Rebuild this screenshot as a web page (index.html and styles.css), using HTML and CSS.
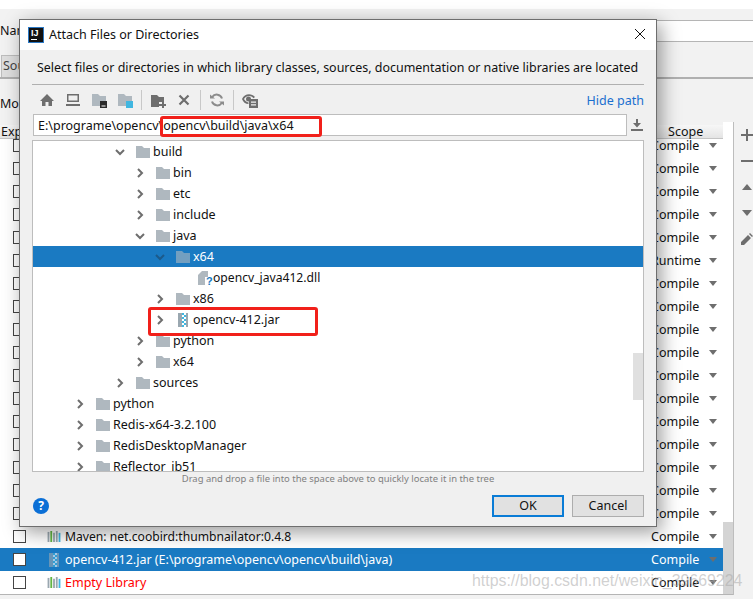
FILE: index.html
```html
<!DOCTYPE html>
<html lang="en">
<head>
<meta charset="utf-8">
<title>Attach Files or Directories</title>
<link rel="stylesheet" href="styles.css">
</head>
<body>
<svg class="defs" width="0" height="0" aria-hidden="true">
  <symbol id="folder" viewBox="0 0 14 12"><path d="M0 0h6l2 2h6v10H0z" fill="#afb8bf"/></symbol>
  <symbol id="chev-r" viewBox="0 0 10 10"><path d="M3 1l4 4-4 4" fill="none" stroke="currentColor" stroke-width="2"/></symbol>
  <symbol id="chev-d" viewBox="0 0 10 10"><path d="M1 3l4 4 4-4" fill="none" stroke="currentColor" stroke-width="2"/></symbol>
  <symbol id="lib" viewBox="0 0 14 12"><path d="M0 1h2v11H0z" fill="#9aa7b0"/><path d="M3 0h2v12H3z" fill="#62b543"/><path d="M6 2h2v10H6z" fill="#9aa7b0"/><path d="M9 0h2v12H9z" fill="#9aa7b0"/><path d="M12 2h2v10h-2z" fill="#40b6e0"/></symbol>
  <symbol id="jar" viewBox="0 0 10 14"><path d="M0 0h10v14H0z" fill="#9aa7b0"/><path d="M4 0h2v2H4zM6 2h2v2H6zM4 4h2v2H4zM6 6h2v2H6zM4 8h2v2H4zM6 10h2v2H6zM4 12h2v2H4z" fill="#40b6e0"/><path d="M6 0h2v2H6zM4 2h2v2H4zM6 4h2v2H6zM4 6h2v2H4zM6 8h2v2H6zM4 10h2v2H4zM6 12h2v2H6z" fill="#fff"/></symbol>
  <symbol id="caret" viewBox="0 0 8 5"><path d="M0 0h8L4 5z" fill="#6e6e6e"/></symbol>
</svg>

<div class="back">
  <div class="top-band"></div>
  <div class="name-row"><span class="clip-label">Nam</span><div class="name-input"></div></div>
  <div class="tab-row"><span class="tab">Sou</span></div>
  <div class="module-row"><span class="clip-label">Mo</span></div>
  <div class="deps">
    <div class="table">
      <div class="thead"><span class="th-exp">Exp</span><span class="th-scope">Scope</span></div>
      <div class="rows">
        <div class="rows-inner">
          <div class="row"><i class="check"></i><span class="name"></span><span class="scope">Compile</span><svg class="caret"><use href="#caret"/></svg></div>
          <div class="row"><i class="check"></i><span class="name"></span><span class="scope">Compile</span><svg class="caret"><use href="#caret"/></svg></div>
          <div class="row"><i class="check"></i><span class="name"></span><span class="scope">Compile</span><svg class="caret"><use href="#caret"/></svg></div>
          <div class="row"><i class="check"></i><span class="name"></span><span class="scope">Compile</span><svg class="caret"><use href="#caret"/></svg></div>
          <div class="row"><i class="check"></i><span class="name"></span><span class="scope">Compile</span><svg class="caret"><use href="#caret"/></svg></div>
          <div class="row"><i class="check"></i><span class="name"></span><span class="scope">Runtime</span><svg class="caret"><use href="#caret"/></svg></div>
          <div class="row"><i class="check"></i><span class="name"></span><span class="scope">Compile</span><svg class="caret"><use href="#caret"/></svg></div>
          <div class="row"><i class="check"></i><span class="name"></span><span class="scope">Compile</span><svg class="caret"><use href="#caret"/></svg></div>
          <div class="row"><i class="check"></i><span class="name"></span><span class="scope">Compile</span><svg class="caret"><use href="#caret"/></svg></div>
          <div class="row"><i class="check"></i><span class="name"></span><span class="scope">Compile</span><svg class="caret"><use href="#caret"/></svg></div>
          <div class="row"><i class="check"></i><span class="name"></span><span class="scope">Compile</span><svg class="caret"><use href="#caret"/></svg></div>
          <div class="row"><i class="check"></i><span class="name"></span><span class="scope">Compile</span><svg class="caret"><use href="#caret"/></svg></div>
          <div class="row"><i class="check"></i><span class="name"></span><span class="scope">Compile</span><svg class="caret"><use href="#caret"/></svg></div>
          <div class="row"><i class="check"></i><span class="name"></span><span class="scope">Compile</span><svg class="caret"><use href="#caret"/></svg></div>
          <div class="row"><i class="check"></i><span class="name"></span><span class="scope">Compile</span><svg class="caret"><use href="#caret"/></svg></div>
          <div class="row"><i class="check"></i><span class="name"></span><span class="scope">Compile</span><svg class="caret"><use href="#caret"/></svg></div>
          <div class="row"><i class="check"></i><span class="name"></span><span class="scope">Compile</span><svg class="caret"><use href="#caret"/></svg></div>
          <div class="row"><i class="check"></i><svg class="lib"><use href="#lib"/></svg><span class="name tight">Maven: net.coobird:thumbnailator:0.4.8</span><span class="scope">Compile</span><svg class="caret"><use href="#caret"/></svg></div>
          <div class="row selected"><i class="check"></i><svg class="row-jar"><use href="#jar"/></svg><span class="name">opencv-412.jar (E:\programe\opencv\opencv\build\java)</span><span class="scope">Compile</span><svg class="caret"><use href="#caret"/></svg></div>
          <div class="row"><i class="check"></i><svg class="lib"><use href="#lib"/></svg><span class="name error">Empty Library</span><span class="scope">Compile</span><svg class="caret"><use href="#caret"/></svg></div>
        </div>
      </div>
    </div>
    <div class="vscroll"><div class="vthumb"></div></div>
    <div class="side">
      <svg class="side-ic" viewBox="0 0 12 12"><path d="M5 0h2v5h5v2H7v5H5V7H0V5h5z" fill="#6e6e6e"/></svg>
      <svg class="side-ic" viewBox="0 0 12 12"><path d="M0 5h12v2H0z" fill="#6e6e6e"/></svg>
      <svg class="side-ic" viewBox="0 0 12 12"><path d="M1 9l5-6 5 6z" fill="#6e6e6e"/></svg>
      <svg class="side-ic" viewBox="0 0 12 12"><path d="M1 3h10L6 9z" fill="#6e6e6e"/></svg>
      <svg class="side-ic" viewBox="0 0 12 12"><path d="M0 12V9l7-7 3 3-7 7zM8 1l1-1 3 3-1 1z" fill="#6e6e6e"/></svg>
    </div>
  </div>
  <div class="foot"></div>
</div>

<div class="dialog">
  <div class="titlebar">
    <span class="logo">IJ</span>
    <span class="title">Attach Files or Directories</span>
    <svg class="close" viewBox="0 0 12 12"><path d="M1 1l10 10M11 1L1 11" stroke="#111" stroke-width="1" fill="none"/></svg>
  </div>
  <div class="dialog-body">
    <p class="message">Select files or directories in which library classes, sources, documentation or native libraries are located</p>
    <div class="toolbar">
      <svg class="tool" viewBox="0 0 16 16"><path d="M8 2L1 9h2v5h3.500v-4h3v4H13V9h2z" fill="#6e6e6e"/></svg>
      <svg class="tool" viewBox="0 0 16 16"><path d="M2 2h12v8H2zM3.500 3.500v5h9v-5zM1 12h14v2H1z" fill="#6e6e6e" fill-rule="evenodd"/></svg>
      <svg class="tool" viewBox="0 0 16 16"><path d="M1 2h6l2 2h6v10H1z" fill="#afb8bf"/><path d="M9 9h7v7H9z" fill="#2b2b2b"/><path d="M10.500 13.500h4v1h-4z" fill="#fff"/></svg>
      <svg class="tool" viewBox="0 0 16 16"><path d="M1 2h6l2 2h6v10H1z" fill="#afb8bf"/><path d="M9 9h7v7H9z" fill="#40b6e0"/></svg>
      <span class="tool-sep"></span>
      <svg class="tool" viewBox="0 0 16 16"><path d="M1 3h6l2 2h5v5H9v5H1z" fill="#6e6e6e"/><path d="M12 9h2v3h2v2h-2v2h-2v-2H9v-2h3z" fill="#6e6e6e"/></svg>
      <svg class="tool" viewBox="0 0 16 16"><path d="M3.500 3.500l9 9M12.500 3.500l-9 9" stroke="#6e6e6e" stroke-width="2.200" fill="none"/></svg>
      <span class="tool-sep"></span>
      <svg class="tool" viewBox="0 0 16 16"><path d="M13 6.500A5.500 5.500 0 0 0 3.200 5M3 9.500A5.500 5.500 0 0 0 12.800 11" stroke="#8c8c8c" stroke-width="2" fill="none"/><path d="M1 2.500l5 4H1zM15 13.500l-5-4h5z" fill="#8c8c8c"/></svg>
      <span class="tool-sep"></span>
      <svg class="tool" viewBox="0 0 16 16"><path d="M0 7C2 2 9 .5 13 5l-1.500 1.200C9 3 4 3.500 2 7c1 2 2.500 3 4.500 3.500V12C3.500 12 1 10 0 7z" fill="#6e6e6e"/><circle cx="6.500" cy="7" r="2.500" fill="#6e6e6e"/><path d="M7 7h9v9H7z" fill="#6e6e6e"/><path d="M9 9.500h5v1.200H9zM9 12.300h5v1.200H9z" fill="#f2f2f2"/></svg>
      <a class="hide-path">Hide path</a>
    </div>
    <div class="path-row">
      <div class="path-field">E:\programe\opencv\opencv\build\java\x64</div>
      <svg class="download" viewBox="0 0 12 12"><path d="M5 0h2v4h3L6 8.500 2 4h3zM0 10h12v2H0z" fill="#6e6e6e"/></svg>
    </div>
    <div class="tree">
      <div class="t d4"><svg class="chev"><use href="#chev-d"/></svg><svg class="folder"><use href="#folder"/></svg><span>build</span></div>
      <div class="t d5"><svg class="chev"><use href="#chev-r"/></svg><svg class="folder"><use href="#folder"/></svg><span>bin</span></div>
      <div class="t d5"><svg class="chev"><use href="#chev-r"/></svg><svg class="folder"><use href="#folder"/></svg><span>etc</span></div>
      <div class="t d5"><svg class="chev"><use href="#chev-r"/></svg><svg class="folder"><use href="#folder"/></svg><span>include</span></div>
      <div class="t d5"><svg class="chev"><use href="#chev-d"/></svg><svg class="folder"><use href="#folder"/></svg><span>java</span></div>
      <div class="t d6 sel"><svg class="chev"><use href="#chev-d"/></svg><svg class="folder"><use href="#folder"/></svg><span>x64</span></div>
      <div class="t d7">
        <svg class="dll" viewBox="0 0 15 14"><path d="M4 0h6v6H7v8H0V4z" fill="#afb8bf"/><text x="8" y="14" class="dll-q">?</text></svg>
        <span class="tight">opencv_java412.dll</span>
      </div>
      <div class="t d6"><svg class="chev"><use href="#chev-r"/></svg><svg class="folder"><use href="#folder"/></svg><span>x86</span></div>
      <div class="t d6"><svg class="chev"><use href="#chev-r"/></svg><svg class="jar"><use href="#jar"/></svg><span>opencv-412.jar</span></div>
      <div class="t d5"><svg class="chev"><use href="#chev-r"/></svg><svg class="folder"><use href="#folder"/></svg><span>python</span></div>
      <div class="t d5"><svg class="chev"><use href="#chev-r"/></svg><svg class="folder"><use href="#folder"/></svg><span>x64</span></div>
      <div class="t d4"><svg class="chev"><use href="#chev-r"/></svg><svg class="folder"><use href="#folder"/></svg><span>sources</span></div>
      <div class="t d2"><svg class="chev"><use href="#chev-r"/></svg><svg class="folder"><use href="#folder"/></svg><span>python</span></div>
      <div class="t d2"><svg class="chev"><use href="#chev-r"/></svg><svg class="folder"><use href="#folder"/></svg><span>Redis-x64-3.2.100</span></div>
      <div class="t d2"><svg class="chev"><use href="#chev-r"/></svg><svg class="folder"><use href="#folder"/></svg><span>RedisDesktopManager</span></div>
      <div class="t d2"><svg class="chev"><use href="#chev-r"/></svg><svg class="folder"><use href="#folder"/></svg><span>Reflector_jb51</span></div>
      <div class="tree-thumb"></div>
    </div>
    <p class="hint">Drag and drop a file into the space above to quickly locate it in the tree</p>
    <div class="actions">
      <span class="help">?</span>
      <button class="btn default">OK</button>
      <button class="btn">Cancel</button>
    </div>
  </div>
</div>

<div class="mark mark-path"></div>
<div class="mark mark-jar"></div>
<div class="watermark">https://blog.csdn.net/weixin_39669224</div>
</body>
</html>
```

FILE: styles.css
```css
* { box-sizing: border-box; }
html, body { margin: 0; padding: 0; }
body {
  width: 753px;
  height: 599px;
  overflow: hidden;
  position: relative;
  background: #f2f2f2;
  font-family: "Noto Sans", "Open Sans", sans-serif;
  font-size: 12.5px;
  color: #111;
}
.defs { position: absolute; }
.tight { font-size: 12.150px; }

.back { display: flex; flex-direction: column; height: 599px; }
.top-band { height: 9px; background: #fff; }
.name-row { display: flex; align-items: center; height: 33px; padding-top: 11px; }
.clip-label { width: 30px; line-height: 20px; flex: none; }
.name-input { flex: 1; height: 22px; background: #fff; border-top: 1px solid #b5b5b5; border-bottom: 1px solid #b5b5b5; }
.tab-row { height: 37px; padding: 13px 0 0 1px; border-bottom: 2px solid #b0b0b0; display: flex; }
.tab { width: 30px; height: 22px; background: #dedede; border: 1px solid #bdbdbd; border-bottom: 0; color: #444; line-height: 20px; padding-left: 1px; }
.module-row { height: 43px; display: flex; align-items: center; padding-top: 6px; }

.deps { height: 473px; display: flex; align-items: stretch; }
.table { width: 726px; display: flex; flex-direction: column; }
.thead { height: 17px; display: flex; justify-content: space-between; padding-top: 3px; background: #f2f2f2; }
.th-exp, .th-scope { height: 14px; line-height: 13px; background: linear-gradient(#f7f7f7, #e4e4e4); border-bottom: 1px solid #c4c4c4; }
.th-exp { width: 40px; padding-left: 1px; }
.th-scope { width: 76px; padding-left: 21px; }
.rows { flex: 1; background: #fff; overflow: hidden; border-bottom: 1px solid #b5b5b5; }
.rows-inner { margin-top: -5px; }
.row { height: 23px; display: flex; align-items: center; padding-left: 13px; position: relative; }
.check { width: 13px; height: 13px; background: #fff; border: 1px solid #444; flex: none; }
.lib { width: 14px; height: 11px; margin-left: 21px; flex: none; }
.row-jar { width: 10px; height: 14px; margin: 0 2px 0 23px; flex: none; opacity: .6; }
.name { margin: -1px 0 0 4px; flex: 1; white-space: nowrap; }
.error { color: #f00; }
.scope { width: 50px; margin: -1px 22px 0 0; flex: none; }
.caret { position: absolute; left: 709px; top: 9px; width: 8px; height: 5px; }
.selected { background: #1a7ac2; color: #fff; }

.vscroll { width: 10px; background: #fff; display: flex; flex-direction: column; justify-content: flex-end; padding-top: 17px; border-bottom: 1px solid #b5b5b5; }
.vthumb { height: 72px; background: #d4d4d4; }
.side { flex: 1; border-left: 1px solid #bdbdbd; display: flex; flex-direction: column; gap: 14px; padding: 7px 0 0 7px; }
.side-ic { width: 12px; height: 12px; flex: none; }
.foot { flex: 1; }

.dialog {
  position: absolute;
  left: 19px;
  top: 19px;
  width: 638px;
  height: 508px;
  background: #f0f0f0;
  border: 1px solid #6e6e6e;
  box-shadow: 4px 5px 18px rgba(0, 0, 0, .4);
  display: flex;
  flex-direction: column;
}
.titlebar { height: 30px; background: #fff; display: flex; align-items: center; padding: 0 10px 0 8px; flex: none; }
.logo {
  width: 16px; height: 16px; background: #111; border: 1px solid #2a78c4; color: #fff;
  font: bold 9px/9px "Liberation Sans", sans-serif; padding: 1px 0 0 2px; flex: none;
}
.logo::after { content: ""; display: block; width: 6px; height: 1px; margin-top: 1px; background: #fff; }
.title { margin-left: 5px; flex: 1; margin-top: -1px; }
.close { width: 12px; height: 12px; margin-top: -2px; }

.dialog-body { flex: 1; display: flex; flex-direction: column; padding: 0 12px; }
.message { margin: 0; height: 35px; padding: 8px 0 0 5px; line-height: 20px; border-bottom: 1px solid #b0b0b0; white-space: nowrap; font-size: 12.460px; }
.toolbar { height: 29px; display: flex; align-items: center; flex: none; padding-left: 7px; gap: 10px; }
.tool { width: 16px; height: 16px; flex: none; }
.tool-sep { width: 1px; height: 20px; background: #c8c8c8; flex: none; margin: 0 -2px; }
.hide-path { margin: 1px 0 0 auto; color: #1a6fcf; }
.path-row { display: flex; align-items: center; height: 22px; flex: none; }
.path-field { width: 594px; height: 22px; background: #fff; border: 1px solid #bdbdbd; line-height: 20px; padding: 1px 0 0 4px; margin-left: 1px; white-space: nowrap; }
.download { width: 12px; height: 12px; margin-left: 4px; }
.tree {
  position: relative;
  margin-top: 4px;
  height: 332px;
  background: #fff;
  border: 1px solid #bdbdbd;
  overflow: hidden;
  flex: none;
}
.t { height: 21px; display: flex; align-items: center; white-space: nowrap; position: relative; }
.d2 { padding-left: 42px; }
.d4 { padding-left: 82px; }
.d5 { padding-left: 102px; }
.d6 { padding-left: 122px; }
.d7 { padding-left: 165px; }
.chev { width: 10px; height: 10px; flex: none; color: #6e6e6e; }
.folder { width: 14px; height: 12px; margin: 0 3px 0 11px; flex: none; }
.jar { width: 10px; height: 14px; margin: 0 5px 0 13px; flex: none; }
.dll { width: 15px; height: 14px; flex: none; overflow: visible; }
.dll-q { font: bold 11px "Liberation Sans", sans-serif; fill: #1a7ac2; }
.sel { background: #1a7ac2; color: #fff; }
.sel .chev { color: #1c5a8a; }
.sel .folder { opacity: .6; }
.tree-thumb { position: absolute; right: 0; top: 212px; width: 10px; height: 47px; background: #e0e0e0; }
.hint { margin: 0; height: 15px; line-height: 14px; text-align: center; font-size: 9.450px; color: #808080; flex: none; }
.actions { display: flex; align-items: center; flex: 1; padding: 0 0 2px 1px; gap: 8px; }
.help { width: 16px; height: 16px; border-radius: 50%; background: #0b6fd6; color: #fff; text-align: center; line-height: 16px; font-size: 12px; font-weight: 700; margin-right: auto; }
.btn { width: 72px; height: 22px; font: inherit; color: #111; background: #e1e1e1; border: 1px solid #adadad; padding: 0; }
.default { border: 2px solid #0a7cd6; }

.mark { position: absolute; border: 3px solid #f1201a; border-radius: 3px; }
.mark-path { left: 160px; top: 116px; width: 162px; height: 21px; }
.mark-jar { left: 148px; top: 307px; width: 170px; height: 29px; }
.watermark { position: absolute; left: 472px; top: 569px; font: 15.900px/24px "Liberation Sans", sans-serif; color: rgba(170, 170, 170, .55); white-space: nowrap; }
```
